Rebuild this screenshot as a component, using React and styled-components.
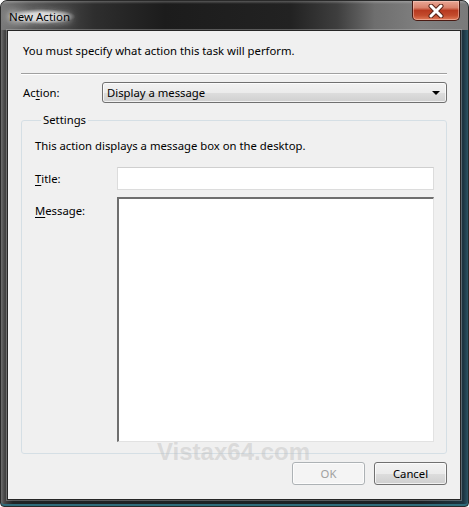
import React from 'react'
import styled, { createGlobalStyle } from 'styled-components'

const Global = createGlobalStyle`
  html, body {
    margin: 0;
    padding: 0;
    background: #fff;
  }
  body {
    font-family: "Noto Sans", "Liberation Sans", sans-serif;
    font-size: 11.3px;
    color: #000;
  }
`

const Window = styled.div`
  position: relative;
  width: 469px;
  height: 507px;
  box-sizing: border-box;
  display: flex;
  flex-direction: column;
  border-radius: 7px 7px 4px 4px;
  overflow: hidden;
  border: 1px solid #2a2a2a;
  background: linear-gradient(90deg, #6f6f6f 0px, #4a4a4a 3px, #3a3a3a 6px, #1e2426 12px, #1a2226 90%, #1c3440 99%, #2b5566 100%);
  box-shadow: inset 0 -2px 0 #2e6c7a;
`

const TitleBar = styled.div`
  height: 29px;
  display: flex;
  align-items: flex-start;
  padding-left: 7px;
  background:
    linear-gradient(180deg, rgba(255,255,255,0.25) 0px, rgba(255,255,255,0) 3px),
    linear-gradient(90deg, #7a7a7a 0%, #5a5a5a 6%, #2e2e2e 20%, #1c1c1c 35%, #222 62%, #3e3e3e 72%, #6e6e6e 80%, #808080 90%, #7a7a7a 100%);
`

const Caption = styled.span`
  margin-top: 8px;
  padding: 0 5px 0 1px;
  font-size: 11.5px;
  color: #000;
  text-shadow: 0 0 6px #fff, 0 0 10px #fff, 0 0 14px rgba(255,255,255,0.8);
  background: radial-gradient(ellipse at center, rgba(225,225,225,0.85) 35%, rgba(200,200,200,0) 72%);
`

const CloseButton = styled.div`
  margin-left: auto;
  margin-right: 8px;
  width: 48px;
  height: 20px;
  box-sizing: border-box;
  border: 1px solid #4a1a12;
  border-top: none;
  border-radius: 0 0 5px 5px;
  display: flex;
  align-items: center;
  justify-content: center;
  background: linear-gradient(180deg, #e9a796 0%, #d9826c 35%, #b83a20 50%, #c24a2c 75%, #e07a58 100%);
  box-shadow: inset 0 0 0 1px rgba(255,220,210,0.45);
`

const Client = styled.div`
  flex: 1;
  margin: 0 7px 6px 6px;
  border: 1px solid #262626;
  box-shadow: 0 0 0 1px rgba(200,200,200,0.35);
  background: #f0f0f0;
  display: flex;
  flex-direction: column;
  padding: 0 13px;
`

const Intro = styled.p`
  margin: 12px 0 0 2px;
  line-height: 16px;
`

const Separator = styled.hr`
  margin: 14px 0 0;
  border: none;
  border-top: 1px solid #a0a0a0;
  border-bottom: 1px solid #fff;
  height: 0;
`

const Row = styled.div`
  display: flex;
  align-items: center;
  margin-top: ${p => p.$top || 0}px;
`

const Label = styled.span`
  width: ${p => p.$width}px;
  flex: none;
  padding-left: ${p => p.$indent || 0}px;
  box-sizing: border-box;
  align-self: ${p => p.$alignTop ? 'flex-start' : 'center'};
  margin-top: ${p => p.$alignTop ? 6 : 0}px;
`

const Select = styled.div`
  flex: 1;
  height: 21px;
  box-sizing: border-box;
  border: 1px solid #707070;
  border-radius: 3px;
  display: flex;
  align-items: center;
  padding: 0 6px 0 4px;
  background: linear-gradient(180deg, #f2f2f2 0%, #ebebeb 50%, #dddddd 51%, #cfcfcf 100%);
  box-shadow: inset 0 0 0 1px rgba(255,255,255,0.7);
`

const Arrow = styled.span`
  margin-left: auto;
  width: 0;
  height: 0;
  border-left: 4px solid transparent;
  border-right: 4px solid transparent;
  border-top: 4px solid #000;
`

const Group = styled.fieldset`
  margin: 9px 0 0;
  padding: 10px 12px 11px 13px;
  border: 1px solid #d5dfe5;
  border-radius: 3px;
  display: flex;
  flex-direction: column;
  min-width: 0;
`

const Legend = styled.legend`
  padding: 0 2px;
  margin-left: 6px;
  line-height: 16px;
`

const Hint = styled.p`
  margin: 0;
  line-height: 16px;
`

const Input = styled.div`
  flex: 1;
  height: 23px;
  box-sizing: border-box;
  background: #fff;
  border: 1px solid #dcdcdc;
  border-top-color: #cfcfcf;
`

const TextArea = styled.div`
  flex: 1;
  height: 245px;
  box-sizing: border-box;
  background: #fff;
  border: 1px solid #e2e2e2;
  border-top: 2px solid #6f6f6f;
  border-left: 2px solid #6f6f6f;
`

const Buttons = styled.div`
  display: flex;
  justify-content: flex-end;
  gap: 9px;
  margin-top: 8px;
`

const Button = styled.div`
  width: 73px;
  height: 23px;
  box-sizing: border-box;
  border-radius: 3px;
  display: flex;
  align-items: center;
  justify-content: center;
  border: 1px solid ${p => p.$disabled ? '#adb2b5' : '#707070'};
  color: ${p => p.$disabled ? '#a0a0a0' : '#000'};
  background: ${p => p.$disabled
    ? '#f4f4f4'
    : 'linear-gradient(180deg, #f2f2f2 0%, #ebebeb 50%, #dddddd 51%, #cfcfcf 100%)'};
  box-shadow: inset 0 0 0 1px rgba(255,255,255,0.7);
`

const Watermark = styled.div`
  position: absolute;
  left: 156px;
  top: 437px;
  font-family: "Liberation Sans", Arial, sans-serif;
  font-weight: 700;
  font-size: 24px;
  color: rgba(190, 190, 190, 0.45);
  pointer-events: none;
`

const Key = styled.u`
  text-decoration-thickness: 1px;
  text-underline-offset: 2px;
`

export default function App() {
  return (
    <>
      <Global />
      <Window>
        <TitleBar>
          <Caption>New Action</Caption>
          <CloseButton>
            <svg width="18" height="14" viewBox="0 0 18 14">
              <path d="M4 2 L14 12 M14 2 L4 12" stroke="#5a2418" strokeWidth="5" strokeLinecap="round" />
              <path d="M4 2 L14 12 M14 2 L4 12" stroke="#fff" strokeWidth="3" strokeLinecap="round" />
            </svg>
          </CloseButton>
        </TitleBar>
        <Client>
          <Intro>You must specify what action this task will perform.</Intro>
          <Separator />
          <Row $top={7}>
            <Label $width={81} $indent={2}>Ac<Key>t</Key>ion:</Label>
            <Select>
              Display a message
              <Arrow />
            </Select>
          </Row>
          <Group>
            <Legend>Settings</Legend>
            <Hint>This action displays a message box on the desktop.</Hint>
            <Row $top={13}>
              <Label $width={82}><Key>T</Key>itle:</Label>
              <Input />
            </Row>
            <Row $top={7}>
              <Label $width={82} $alignTop><Key>M</Key>essage:</Label>
              <TextArea />
            </Row>
          </Group>
          <Buttons>
            <Button $disabled>OK</Button>
            <Button>Cancel</Button>
          </Buttons>
        </Client>
        <Watermark>Vistax64.com</Watermark>
      </Window>
    </>
  )
}
